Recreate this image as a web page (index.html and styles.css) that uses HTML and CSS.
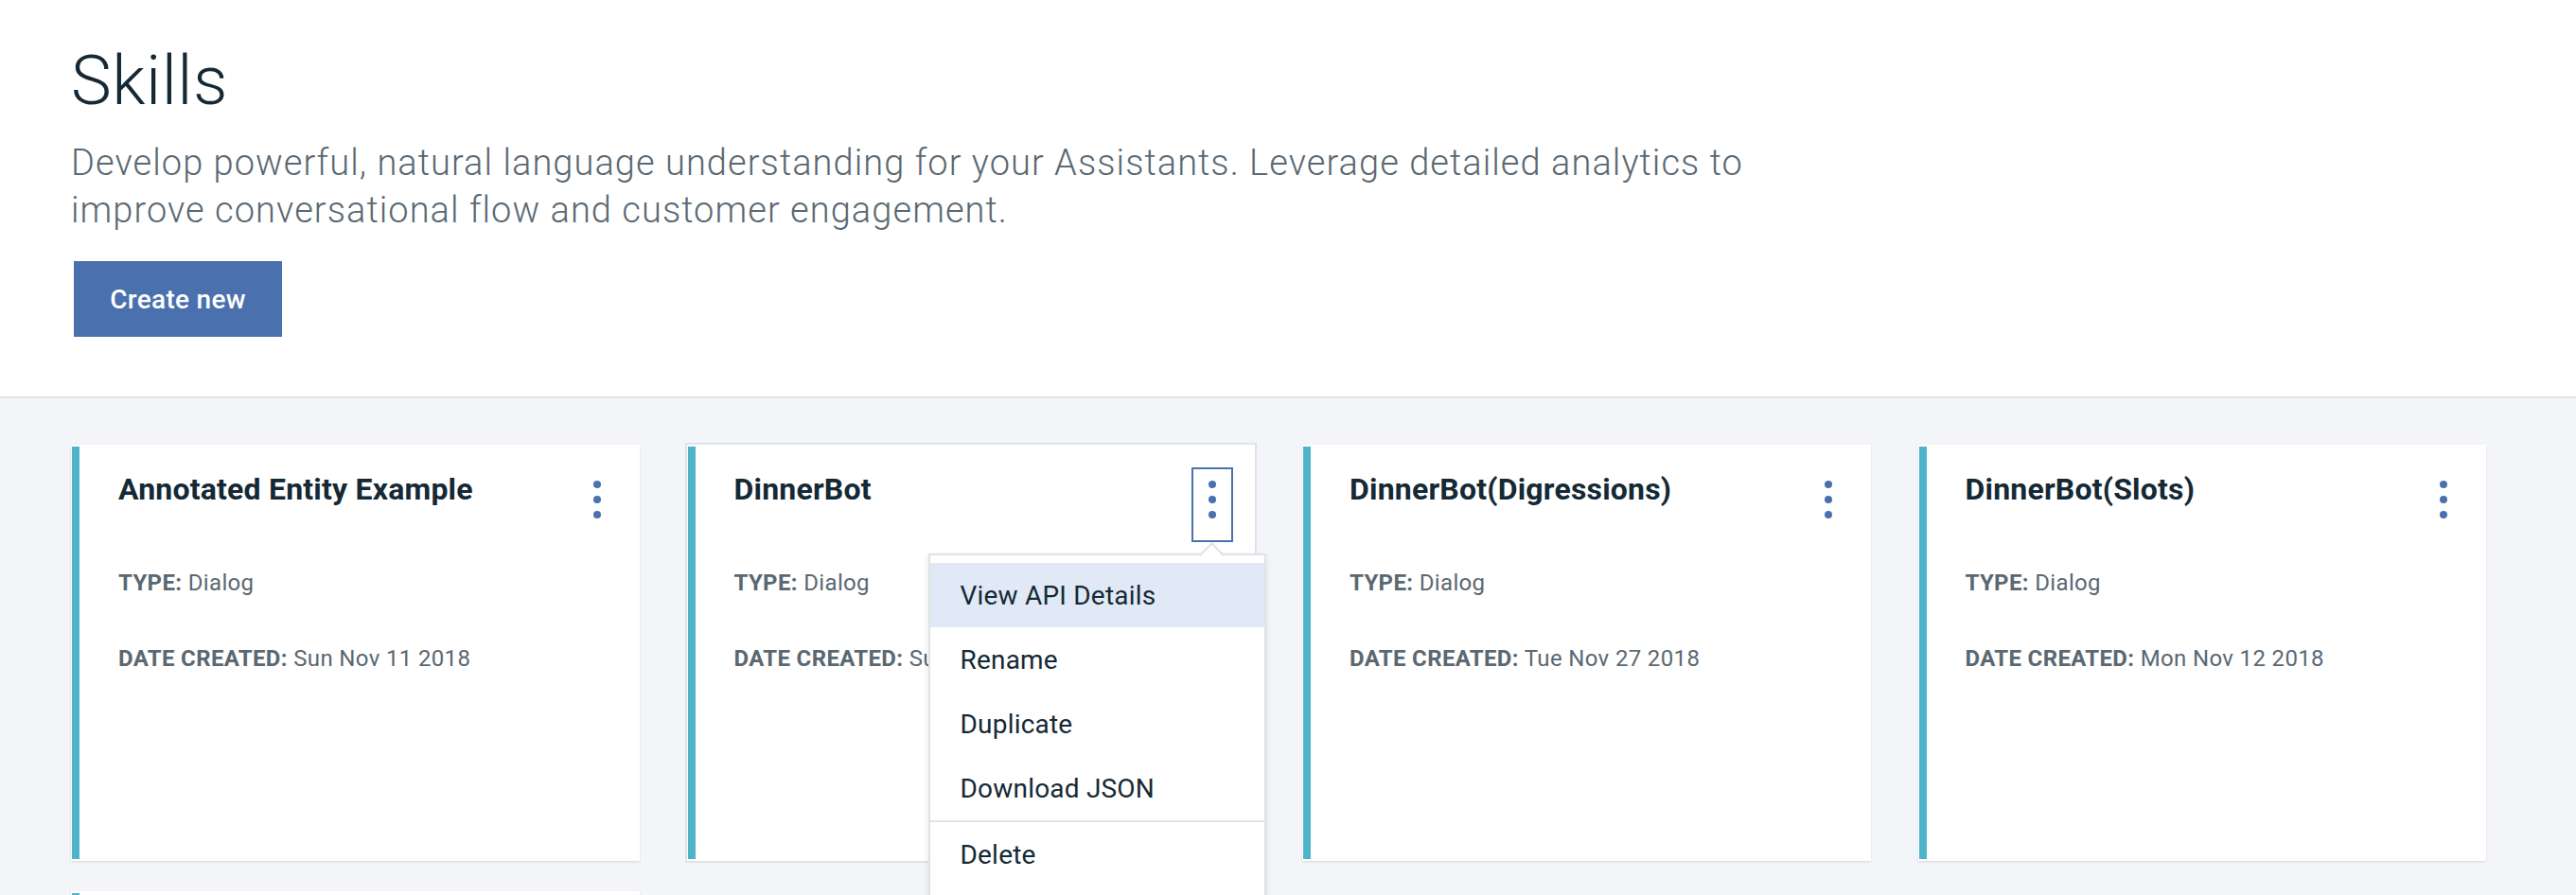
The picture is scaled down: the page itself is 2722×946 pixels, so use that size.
FILE: index.html
```html
<!DOCTYPE html>
<html lang="en">
<head>
<meta charset="utf-8">
<title>Skills</title>
<link rel="stylesheet" href="styles.css">
</head>
<body>
<header class="page-header">
  <h1 class="page-title">Skills</h1>
  <p class="page-desc">Develop powerful, natural language understanding for your Assistants. Leverage detailed analytics to improve conversational flow and customer engagement.</p>
  <button class="btn-primary" type="button">Create new</button>
</header>

<main class="skills">
  <div class="card-grid">
    <article class="card">
      <div class="card-inner">
        <div class="card-head">
          <h2 class="card-title">Annotated Entity Example</h2>
          <button class="kebab" type="button" aria-label="Options">
            <svg width="8" height="40" viewBox="0 0 8 40"><circle cx="4" cy="4" r="4"/><circle cx="4" cy="20" r="4"/><circle cx="4" cy="36" r="4"/></svg>
          </button>
        </div>
        <p class="meta meta-type"><span class="meta-label">TYPE:</span> Dialog</p>
        <p class="meta meta-date"><span class="meta-label">DATE CREATED:</span> Sun Nov 11 2018</p>
      </div>
    </article>

    <article class="card card-active">
      <div class="card-inner">
        <div class="card-head">
          <h2 class="card-title">DinnerBot</h2>
          <button class="kebab kebab-focus" type="button" aria-label="Options">
            <svg width="8" height="40" viewBox="0 0 8 40"><circle cx="4" cy="4" r="4"/><circle cx="4" cy="20" r="4"/><circle cx="4" cy="36" r="4"/></svg>
          </button>
        </div>
        <p class="meta meta-type"><span class="meta-label">TYPE:</span> Dialog</p>
        <p class="meta meta-date"><span class="meta-label">DATE CREATED:</span> Sun Nov 25 2018</p>
      </div>
      <ul class="overflow-menu">
        <li class="menu-item is-hover">View API Details</li>
        <li class="menu-item">Rename</li>
        <li class="menu-item">Duplicate</li>
        <li class="menu-item">Download JSON</li>
        <li class="menu-item menu-danger">Delete</li>
      </ul>
    </article>

    <article class="card">
      <div class="card-inner">
        <div class="card-head">
          <h2 class="card-title">DinnerBot(Digressions)</h2>
          <button class="kebab" type="button" aria-label="Options">
            <svg width="8" height="40" viewBox="0 0 8 40"><circle cx="4" cy="4" r="4"/><circle cx="4" cy="20" r="4"/><circle cx="4" cy="36" r="4"/></svg>
          </button>
        </div>
        <p class="meta meta-type"><span class="meta-label">TYPE:</span> Dialog</p>
        <p class="meta meta-date"><span class="meta-label">DATE CREATED:</span> Tue Nov 27 2018</p>
      </div>
    </article>

    <article class="card">
      <div class="card-inner">
        <div class="card-head">
          <h2 class="card-title">DinnerBot(Slots)</h2>
          <button class="kebab" type="button" aria-label="Options">
            <svg width="8" height="40" viewBox="0 0 8 40"><circle cx="4" cy="4" r="4"/><circle cx="4" cy="20" r="4"/><circle cx="4" cy="36" r="4"/></svg>
          </button>
        </div>
        <p class="meta meta-type"><span class="meta-label">TYPE:</span> Dialog</p>
        <p class="meta meta-date"><span class="meta-label">DATE CREATED:</span> Mon Nov 12 2018</p>
      </div>
    </article>

    <article class="card">
      <div class="card-inner">
        <div class="card-head">
          <h2 class="card-title">Skill</h2>
          <button class="kebab" type="button" aria-label="Options">
            <svg width="8" height="40" viewBox="0 0 8 40"><circle cx="4" cy="4" r="4"/><circle cx="4" cy="20" r="4"/><circle cx="4" cy="36" r="4"/></svg>
          </button>
        </div>
        <p class="meta meta-type"><span class="meta-label">TYPE:</span> Dialog</p>
        <p class="meta meta-date"><span class="meta-label">DATE CREATED:</span> Mon Nov 12 2018</p>
      </div>
    </article>
  </div>
</main>
</body>
</html>
```

FILE: styles.css
```css
* { box-sizing: border-box; }

html, body {
  margin: 0;
  padding: 0;
}

body {
  font-family: Roboto, "Noto Sans", "Liberation Sans", sans-serif;
  background: #f4f5f8;
  color: #152935;
  overflow: hidden;
}

.page-header {
  background: #ffffff;
  padding: 46px 75px 63px;
  border-bottom: 2px solid #dfe3e6;
}

.page-title {
  margin: 0;
  font-size: 72px;
  line-height: 80px;
  font-weight: 300;
  letter-spacing: 0.5px;
  color: #152935;
}

.page-desc {
  margin: 21px 0 0;
  max-width: 1850px;
  font-size: 38px;
  line-height: 50px;
  font-weight: 300;
  letter-spacing: 1.05px;
  color: #5a6872;
}

.btn-primary {
  margin: 29px 0 0 3px;
  width: 220px;
  height: 80px;
  border: 0;
  background: #4a70ad;
  color: #ffffff;
  font-family: inherit;
  font-size: 28px;
  font-weight: 500;
  letter-spacing: 0.3px;
  text-align: center;
  padding: 0;
}

.skills {
  padding: 49px 75px 0;
}

.card-grid {
  display: grid;
  grid-template-columns: repeat(4, 600.5px);
  column-gap: 50px;
  row-gap: 32px;
}

.card {
  position: relative;
  height: 440px;
  background: #ffffff;
  padding: 2px 0 2px 1px;
  box-shadow: 0 1px 2px rgba(0, 0, 0, 0.12);
}

.card-active {
  box-shadow: 0 0 0 2px #dfe3e6;
}

.card-inner {
  height: 100%;
  border-left: 8px solid #50b4c8;
  padding: 22px 23px 0 41px;
}

.card-head {
  display: flex;
  justify-content: space-between;
  align-items: flex-start;
}

.card-title {
  margin: 0;
  padding-top: 3px;
  font-size: 32px;
  line-height: 40px;
  font-weight: 700;
  letter-spacing: 0.2px;
  color: #152935;
}

.kebab {
  flex: none;
  width: 44px;
  height: 79px;
  padding: 12px 0 0;
  margin: 0;
  background: transparent;
  border: 2px solid transparent;
  display: flex;
  justify-content: center;
  align-items: flex-start;
}

.kebab svg {
  fill: #4a70ad;
  display: block;
}

.kebab-focus {
  border-color: #4a70ad;
}

.meta {
  margin: 0;
  font-size: 24px;
  line-height: 32px;
  letter-spacing: 0.35px;
  color: #5a6872;
  font-weight: 400;
}

.meta-type { margin-top: 27px; }
.meta-date { margin-top: 48px; }

.meta-label {
  font-weight: 700;
}

.overflow-menu {
  position: absolute;
  left: 255px;
  top: 115px;
  width: 357px;
  margin: 0;
  padding: 8px 0 24px;
  list-style: none;
  background: #ffffff;
  border: 2px solid #dfe3e6;
  box-shadow: 0 2px 6px rgba(0, 0, 0, 0.1);
  z-index: 5;
}

.overflow-menu::before {
  content: "";
  position: absolute;
  top: -10px;
  left: 288px;
  width: 17px;
  height: 17px;
  background: #ffffff;
  border-top: 2px solid #dfe3e6;
  border-left: 2px solid #dfe3e6;
  transform: rotate(45deg);
}

.menu-item {
  position: relative;
  height: 68px;
  padding-left: 32px;
  display: flex;
  align-items: center;
  font-size: 28px;
  letter-spacing: 0.2px;
  color: #152935;
}

.menu-item.is-hover {
  background: #e0e9f5;
}

.menu-danger {
  border-top: 2px solid #dfe3e6;
  height: 70px;
}
```
